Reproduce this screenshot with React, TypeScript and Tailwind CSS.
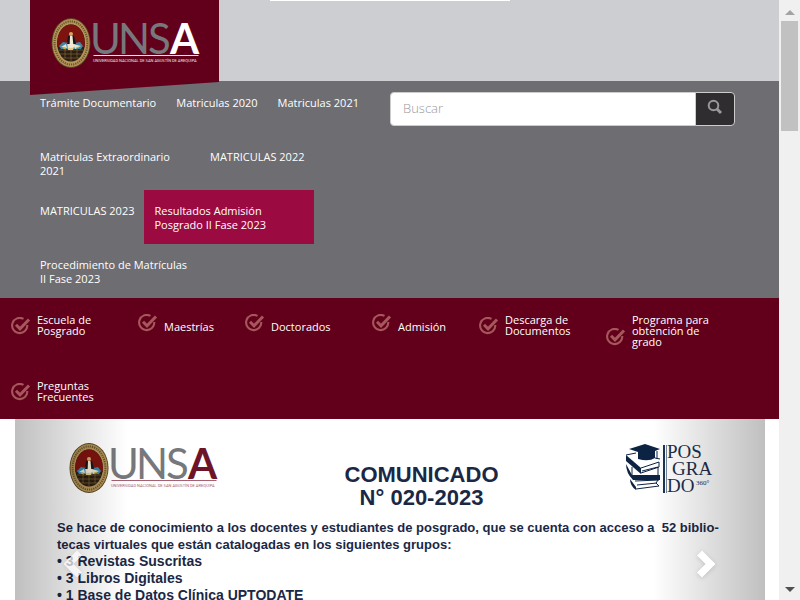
import React from "react";

const topLinks = [
  { label: "Trámite Documentario" },
  { label: "Matriculas 2020" },
  { label: "Matriculas 2021" },
  { label: "Matriculas Extraordinario 2021" },
  { label: "MATRICULAS 2022" },
  { label: "MATRICULAS 2023" },
  { label: "Resultados Admisión Posgrado II Fase 2023", active: true },
  { label: "Procedimiento de Matrículas II Fase 2023" },
];

const sections = [
  { label: "Escuela de Posgrado", wide: true },
  { label: "Maestrías", wide: false },
  { label: "Doctorados", wide: true },
  { label: "Admisión", wide: false },
  { label: "Descarga de Documentos", wide: true },
  { label: "Programa para obtención de grado", wide: true },
  { label: "Preguntas Frecuentes", wide: true },
];

const singleLine = ["Maestrías", "Doctorados", "Admisión"];

function UnsaLogo({ main, accent }: { main: string; accent: string }) {
  return (
    <svg width="149" height="52" viewBox="0 0 149 52" role="img" aria-label="UNSA" className="shrink-0 overflow-visible font-normal">
      <ellipse cx="20" cy="25" rx="19.5" ry="25" fill="#5b4520" />
      <ellipse cx="20" cy="25" rx="18.6" ry="24" fill="#b3945a" />
      <ellipse cx="20" cy="25" rx="16.4" ry="21.6" fill="none" stroke="#6b5428" strokeWidth="2" strokeDasharray="1.2 1" />
      <ellipse cx="20" cy="25" rx="13.8" ry="18.6" fill="#2a1d12" />
      <path d="M6.2 25a13.800 18.600 0 0 1 27.600 0v4H6.200z" fill="#7d130f" />
      <path d="M8 32h24M9 36h22M12 40h16M14 29v11M20 29v14M26 29v11" stroke="#8a6d35" strokeWidth=".6" />
      <path d="M8 28l4-4 5 1 3-3 4 3 5-1 3 4-2 3H10z" fill="#3b88ab" />
      <path d="M10 29l5-3 1 4zM22 26l8 2-6 3zM16 24l8 1-2 7h-5z" fill="#e9e2cc" />
      <path d="M17 18h6l2 8h-9z" fill="#16151b" />
      <path d="M19 18h2.500l1 11h-4z" fill="#f2e9d5" />
      <circle cx="20" cy="16" r="2" fill="#d9a56a" />
      <path d="M12 30l3 1M25 30l3-1M17 31h5" stroke="#d8ad3c" strokeWidth="1.200" />
      <text y="36" fontFamily="Lato, sans-serif" fontSize="42" fill="#77787b">
        <tspan x="39">U</tspan>
        <tspan x="67">N</tspan>
        <tspan x="97">S</tspan>
        <tspan x="119" fill={main} fontWeight="700">A</tspan>
      </text>
      <path d="M42.500 37.500h105" stroke={accent} strokeWidth="1" />
      <text x="42" y="44" fontFamily="Roboto, sans-serif" fontSize="4" fill={accent}>
        UNIVERSIDAD NACIONAL DE SAN AGUSTÍN DE AREQUIPA
      </text>
    </svg>
  );
}

function PosgradoLogo() {
  return (
    <svg width="88" height="51" viewBox="0 0 88 51" role="img" aria-label="Posgrado 360" className="shrink-0 overflow-visible font-normal">
      <g fill="#0d2344">
        <path d="M4 6l16-5 15 5-5 2v7q-6 4-17 1V9z" />
        <path d="M1 12l15 13v6L1 18z" />
        <path d="M1 21l6 11h28v5H8Q1 30 1 21z" />
        <path d="M5 36l6 8v3Q5 43 5 36z" />
        <path d="M32 8v8" stroke="#0d2344" />
      </g>
      <g fill="none" stroke="#0d2344" strokeWidth="1">
        <path d="M1 12l10-2M16 25l18-6v5l-18 6M30 15l5 1" />
        <path d="M7 32V24M33 24v8M17 28l16-4" />
        <path d="M10 38l24-1M11 46l23-3M12 42l20-2M33 37l-2 3 3 3" />
      </g>
      <path d="M38 2h2v48h-2z" fill="#1d3354" />
      <path d="M41.500 2v48" stroke="#1d3354" strokeWidth=".6" />
      <g fontFamily="Liberation Serif, serif" fontSize="19" fill="#1d2f4d">
        <text x="42" y="15">POS</text>
        <text x="47" y="32">GRA</text>
        <text x="42" y="49">DO</text>
        <text x="71" y="42" fontSize="7">360°</text>
      </g>
    </svg>
  );
}

function CheckIcon() {
  return (
    <svg width="20" height="18" viewBox="0 0 20 18" aria-hidden="true" className="shrink-0">
      <path d="M12.500 1.900A7.600 7.600 0 1 0 16.300 8" fill="none" stroke="#a5575b" strokeWidth="2.100" />
      <path d="M5 7.800l4 4 9-9.300" fill="none" stroke="#a5575b" strokeWidth="3" />
    </svg>
  );
}

function Chevron({ flip }: { flip?: boolean }) {
  return (
    <svg width="20" height="28" viewBox="0 0 20 28" aria-hidden="true" className={flip ? "-scale-x-100" : ""}>
      <path d="M15.500 3L4.500 14l11 11" fill="none" stroke="#fff" strokeWidth="7" />
    </svg>
  );
}

function Header() {
  return (
    <header>
      <div className="relative h-[81px] bg-[#cdced2]">
        <div className="mx-auto h-px w-60 bg-white" />
        <a href="#inicio" className="absolute top-0 left-[30px] z-10 block h-[95px] w-[189px] bg-[#62001b] pt-[18px] pl-[21px] [clip-path:polygon(0_0,100%_0,100%_82px,0_95px)]">
          <UnsaLogo main="#ffffff" accent="#f1e3e6" />
        </a>
      </div>
      <div className="flex items-start bg-[#6e6d72] pr-[44px] pl-[30px]">
        <nav aria-label="Trámites" className="w-[360px] shrink-0 pt-px">
          <ul className="flex flex-wrap pr-[20px]">
            {topLinks.map((l) => (
              <li key={l.label} className="max-w-[170px]">
                <a
                  href="#tramites"
                  className={`block h-[54px] px-2.5 pt-3.5 text-[11px] leading-[14px] text-white ${l.active ? "w-[170px] bg-[#9b0b42]" : ""}`}
                >
                  {l.label}
                </a>
              </li>
            ))}
          </ul>
        </nav>
        <form className="mt-[11px] flex h-[34px] flex-1" onSubmit={(e) => e.preventDefault()}>
          <input
            type="text"
            aria-label="Buscar"
            placeholder="Buscar"
            className="min-w-0 flex-1 rounded-l border border-[#ccc] bg-white px-3 text-[13px] font-light text-[#555] placeholder:text-[#999]"
          />
          <button type="submit" aria-label="Enviar búsqueda" className="-ml-px flex w-10 items-center justify-center rounded-r border border-[#ccc] bg-[#302d31]">
            <svg width="16" height="16" viewBox="0 0 16 16" aria-hidden="true" className="-mt-1">
              <circle cx="6.500" cy="6.500" r="4.800" fill="none" stroke="#999" strokeWidth="2" />
              <path d="M10 10l4 4" stroke="#999" strokeWidth="3" />
            </svg>
          </button>
        </form>
      </div>
    </header>
  );
}

function SectionNav() {
  return (
    <nav aria-label="Secciones" className="bg-[#62001b] pt-4 pb-1.5 pl-[11px]">
      <ul className="flex flex-wrap">
        {sections.map((s) => {
          const single = singleLine.includes(s.label);
          return (
            <li key={s.label} className={`min-h-[66px] last:min-h-[33px] ${s.wide ? "w-[127px]" : "w-[107px]"}`}>
              <a href="#seccion" className={`flex items-end gap-1.5 text-[11px] leading-[11px] text-white ${single ? "" : "[&>svg]:mb-px"}`}>
                <CheckIcon />
                <span className="max-w-[80px]">{s.label}</span>
              </a>
            </li>
          );
        })}
      </ul>
    </nav>
  );
}

function Carousel() {
  return (
    <section aria-label="Comunicados" className="relative mr-[14px] ml-[15px] min-h-0 flex-1 overflow-hidden bg-white font-['Liberation_Sans',Arial,sans-serif] font-bold text-[#1b2845]">
      <div className="flex items-start justify-between pt-6 pr-[52px] pl-[54px]">
        <UnsaLogo main="#6e1428" accent="#a7606f" />
        <h1 className="mt-5 text-center text-[22px] leading-[23px]">
          COMUNICADO
          <br />
          N° 020-2023
        </h1>
        <PosgradoLogo />
      </div>
      <div className="mt-2.5 pl-[42px] text-[13px] leading-[17px] whitespace-nowrap">
        <p>
          Se hace de conocimiento a los docentes y estudiantes de posgrado, que se cuenta con acceso a&nbsp; 52 biblio-
          <br />
          tecas virtuales que están catalogadas en los siguientes grupos:
        </p>
        <ul className="text-[14px] leading-[17px]">
          <li>• 3 Revistas Suscritas</li>
          <li>• 3 Libros Digitales</li>
          <li>• 1 Base de Datos Clínica UPTODATE</li>
        </ul>
      </div>
      <button type="button" aria-label="Anterior" className="absolute inset-y-0 left-0 w-[15%] bg-linear-to-r from-black/25 to-transparent">
        <span className="absolute top-[131px] left-[49px] opacity-70 drop-shadow-sm"><Chevron /></span>
      </button>
      <button type="button" aria-label="Siguiente" className="absolute inset-y-0 right-0 w-[15%] bg-linear-to-l from-black/25 to-transparent">
        <span className="absolute top-[131px] right-[50px] drop-shadow-sm"><Chevron flip /></span>
      </button>
    </section>
  );
}

function ScrollRail() {
  return (
    <div aria-hidden="true" className="flex w-[21px] shrink-0 flex-col items-center bg-[#f0f0f0] pt-2.5 pb-2">
      <div className="h-0 w-0 border-x-[5px] border-b-[5px] border-x-transparent border-b-[#a3a3a3]" />
      <div className="mt-1.5 h-[110px] w-[17px] bg-[#c1c1c1]" />
      <div className="mt-auto h-0 w-0 border-x-[5px] border-t-[5px] border-x-transparent border-t-[#505050]" />
    </div>
  );
}

export default function App() {
  return (
    <div className="flex h-screen overflow-hidden bg-white font-['Open_Sans',sans-serif]">
      <main className="flex min-w-0 flex-1 flex-col">
        <Header />
        <SectionNav />
        <Carousel />
      </main>
      <ScrollRail />
    </div>
  );
}
